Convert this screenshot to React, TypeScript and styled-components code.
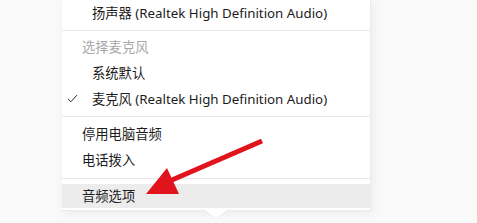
import styled, { createGlobalStyle } from 'styled-components'

const GlobalStyle = createGlobalStyle`
	html, body {
		margin: 0;
		padding: 0;
		background: #f9f9f9;
	}
	body {
		font-family: "Noto Sans", "Noto Sans CJK SC", sans-serif;
	}
`

interface Item {
	label: string
	checked?: boolean
	indent?: boolean
}

const App = () => {
	const mics: Item[] = [
		{ label: '系统默认', indent: true },
		{ label: '麦克风 (Realtek High Definition Audio)', indent: true, checked: true }
	]
	return (
		<>
			<GlobalStyle />
			<Page>
				<Menu>
					<Section $top={0} $bottom={4} $first>
						<Row $indent>扬声器 (Realtek High Definition Audio)</Row>
					</Section>
					<Section $top={3} $bottom={4}>
						<Header>选择麦克风</Header>
						{mics.map((m) => (
							<Row key={m.label} $indent={m.indent}>
								{m.checked && (
									<Check viewBox="0 0 12 10">
										<path d="M1 5.5 L4.2 8.6 L11 1.2" fill="none" stroke="#222" strokeWidth="1.1" />
									</Check>
								)}
								{m.label}
							</Row>
						))}
					</Section>
					<Section $top={4} $bottom={5}>
						<Row>停用电脑音频</Row>
						<Row>电话拨入</Row>
					</Section>
					<Section $top={5} $bottom={2}>
						<Row $hover $height={24}>音频选项</Row>
					</Section>
					<Tail />
				</Menu>
				<Arrow viewBox="0 0 477 223">
					<line x1="262" y1="141" x2="165" y2="183" stroke="#e1131c" strokeWidth="5" />
					<polygon points="146,194 167,168 179,194" fill="#e1131c" />
				</Arrow>
			</Page>
		</>
	)
}
export default App

const Page = styled.div`
	position: relative;
	width: 477px;
	height: 223px;
	overflow: hidden;
	padding-left: 62px;
	box-sizing: border-box;
`
const Menu = styled.div`
	position: relative;
	width: 308px;
	background: #fff;
	border-right: 1px solid #ebebeb;
	border-bottom: 1px solid #ebebeb;
	box-shadow: 2px 2px 10px rgba(0, 0, 0, 0.06);
	display: flex;
	flex-direction: column;
`
const Section = styled.div<{ $top: number; $bottom: number; $first?: boolean }>`
	display: flex;
	flex-direction: column;
	padding-top: ${(p) => p.$top}px;
	padding-bottom: ${(p) => p.$bottom}px;
	border-top: ${(p) => (p.$first ? 'none' : '1px solid #e8e8e8')};
`
const Row = styled.div<{ $indent?: boolean; $hover?: boolean; $height?: number }>`
	position: relative;
	height: ${(p) => p.$height ?? 26}px;
	display: flex;
	align-items: center;
	padding-left: ${(p) => (p.$indent ? 30 : 20)}px;
	padding-bottom: 2px;
	box-sizing: border-box;
	font-size: 13.3px;
	color: #1c1c1c;
	background: ${(p) => (p.$hover ? '#ececec' : 'transparent')};
	white-space: nowrap;
`
const Header = styled(Row)`
	color: #a8a8a8;
`
const Check = styled.svg`
	position: absolute;
	left: 5px;
	top: 8px;
	width: 11px;
	height: 9px;
`
const Tail = styled.div`
	position: absolute;
	left: 143px;
	bottom: -8px;
	width: 0;
	height: 0;
	border-left: 11px solid transparent;
	border-right: 11px solid transparent;
	border-top: 8px solid #fff;
	filter: drop-shadow(0 1px 1px rgba(0, 0, 0, 0.04));
`
const Arrow = styled.svg`
	position: absolute;
	left: 0;
	top: 0;
	width: 477px;
	height: 223px;
	pointer-events: none;
`
